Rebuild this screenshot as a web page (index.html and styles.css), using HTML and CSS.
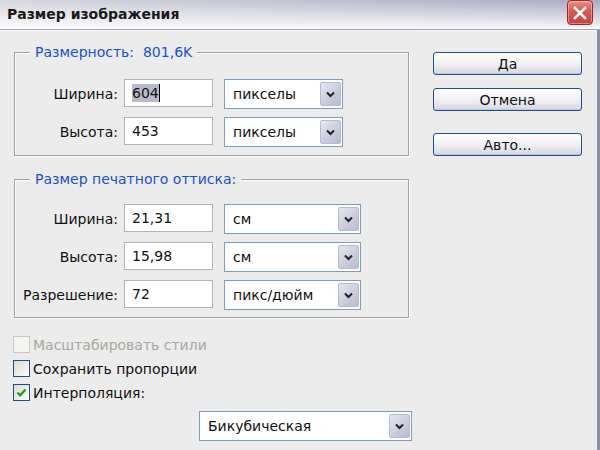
FILE: index.html
```html
<!DOCTYPE html>
<html lang="ru">
<head>
<meta charset="utf-8">
<title>Размер изображения</title>
<link rel="stylesheet" href="styles.css">
</head>
<body>
<div class="window">
  <div class="titlebar">
    <span class="title">Размер изображения</span>
    <div class="close">
      <svg width="16" height="16" viewBox="0 0 16 16"><path d="M3 3 L13 13 M13 3 L3 13" stroke="#fff" stroke-width="2.6" stroke-linecap="square" fill="none"/></svg>
    </div>
  </div>
  <div class="content">
    <div class="main">
      <div class="group g1">
        <div class="legend">Размерность:&nbsp; 801,6K</div>
        <div class="row">
          <span class="label">Ширина:</span>
          <div class="input"><span class="selected">604</span><span class="caret"></span></div>
          <div class="combo c1"><span class="ctext">пикселы</span><span class="drop"><svg width="9" height="7" viewBox="0 0 9 7"><path d="M1 1.5 L4.5 5 L8 1.5" stroke="#222" stroke-width="2" fill="none"/></svg></span></div>
        </div>
        <div class="row">
          <span class="label">Высота:</span>
          <div class="input">453</div>
          <div class="combo c1"><span class="ctext">пикселы</span><span class="drop"><svg width="9" height="7" viewBox="0 0 9 7"><path d="M1 1.5 L4.5 5 L8 1.5" stroke="#222" stroke-width="2" fill="none"/></svg></span></div>
        </div>
      </div>
      <div class="group g2">
        <div class="legend">Размер печатного оттиска:</div>
        <div class="row">
          <span class="label">Ширина:</span>
          <div class="input">21,31</div>
          <div class="combo c2"><span class="ctext">см</span><span class="drop"><svg width="9" height="7" viewBox="0 0 9 7"><path d="M1 1.5 L4.5 5 L8 1.5" stroke="#222" stroke-width="2" fill="none"/></svg></span></div>
        </div>
        <div class="row">
          <span class="label">Высота:</span>
          <div class="input">15,98</div>
          <div class="combo c2"><span class="ctext">см</span><span class="drop"><svg width="9" height="7" viewBox="0 0 9 7"><path d="M1 1.5 L4.5 5 L8 1.5" stroke="#222" stroke-width="2" fill="none"/></svg></span></div>
        </div>
        <div class="row">
          <span class="label">Разрешение:</span>
          <div class="input">72</div>
          <div class="combo c2"><span class="ctext">пикс/дюйм</span><span class="drop"><svg width="9" height="7" viewBox="0 0 9 7"><path d="M1 1.5 L4.5 5 L8 1.5" stroke="#222" stroke-width="2" fill="none"/></svg></span></div>
        </div>
      </div>
      <div class="checks">
        <div class="check disabled"><span class="box"></span><span>Масштабировать стили</span></div>
        <div class="check"><span class="box"></span><span>Сохранить пропорции</span></div>
        <div class="check"><span class="box"><svg width="11" height="11" viewBox="0 0 11 11"><path d="M1.5 5.5 L4.2 8.3 L9.5 2.5" stroke="#21a121" stroke-width="2.4" fill="none"/></svg></span><span>Интерполяция:</span></div>
      </div>
      <div class="bottom">
        <div class="combo c3"><span class="ctext">Бикубическая</span><span class="drop"><svg width="9" height="7" viewBox="0 0 9 7"><path d="M1 1.5 L4.5 5 L8 1.5" stroke="#222" stroke-width="2" fill="none"/></svg></span></div>
      </div>
    </div>
    <div class="buttons">
      <div class="btn b-ok">Да</div>
      <div class="btn b-cancel">Отмена</div>
      <div class="btn b-auto">Авто...</div>
    </div>
  </div>
</div>
</body>
</html>
```
FILE: styles.css
```css
* { box-sizing: border-box; }
html, body { margin: 0; padding: 0; }
body {
  width: 600px;
  height: 450px;
  overflow: hidden;
  font-family: "DejaVu Sans", Verdana, sans-serif;
  font-size: 14px;
  color: #111;
  background: #ececec;
}
.window {
  width: 600px;
  height: 450px;
  display: flex;
  flex-direction: column;
  background: #ececec;
}
.titlebar {
  height: 30px;
  flex: none;
  display: flex;
  justify-content: space-between;
  align-items: flex-start;
  background:
    linear-gradient(to bottom, rgba(255,255,255,0) 0%, rgba(255,255,255,0.92) 100%),
    linear-gradient(to right, #d6d6de, #aaaac4);
  border-bottom: 1px solid #a4a4b8;
  box-shadow: 0 1px 0 #fafafa;
}
.title {
  font-weight: bold;
  font-size: 14px;
  color: #1a1a1a;
  padding-left: 7px;
  line-height: 29px;
}
.close {
  width: 26px;
  height: 25px;
  margin-right: 7px;
  border: 1px solid #9a2a2a;
  border-radius: 4px;
  background: linear-gradient(to bottom, #ec8e86 0%, #d85a52 45%, #c8423c 100%);
  box-shadow: inset 0 0 0 1px rgba(255,255,255,0.35);
  display: flex;
  align-items: center;
  justify-content: center;
}
.content {
  flex: 1;
  display: flex;
  border-right: 3px solid #8e8ea6;
}
.main {
  width: 433px;
  padding-left: 14px;
  padding-top: 22px;
  display: flex;
  flex-direction: column;
}
.group {
  position: relative;
  width: 395px;
  border: 1px solid #a2a2a2;
  box-shadow: 1px 1px 0 #fff, inset 1px 1px 0 #fff;
  display: flex;
  flex-direction: column;
  gap: 8px;
}
.g1 { padding: 26px 0 8px 0; }
.g2 { margin-top: 23px; padding: 24px 0 7px 0; }
.legend {
  position: absolute;
  top: -10px;
  left: 15px;
  padding: 0 5px;
  background: #ececec;
  color: #1a4fd6;
  line-height: 18px;
}
.row {
  display: flex;
  align-items: center;
  height: 30px;
}
.label {
  width: 104px;
  text-align: right;
  padding-right: 1px;
}
.input {
  margin-left: 5px;
  width: 89px;
  height: 28px;
  align-self: flex-start;
  background: #fff;
  border: 1px solid #b4b4b4;
  padding-left: 7px;
  line-height: 26px;
  display: flex;
  align-items: center;
}
.selected {
  background: #b9b9cb;
  line-height: 18px;
}
.caret {
  display: inline-block;
  width: 1px;
  height: 18px;
  background: #000;
}
.combo {
  height: 30px;
  background: #fff;
  border: 1px solid #7f9db9;
  display: flex;
  align-items: center;
  justify-content: space-between;
  padding: 2px 1px 2px 8px;
}
.c1 { margin-left: 11px; width: 119px; }
.c2 { margin-left: 11px; width: 137px; }
.c3 { width: 213px; }
.drop {
  width: 21px;
  height: 100%;
  border: 1px solid #b8bacf;
  border-radius: 2px;
  background: linear-gradient(135deg, #e6e7f1 0%, #c9cbdc 60%, #b9bbd0 100%);
  display: flex;
  align-items: center;
  justify-content: center;
}
.checks {
  margin-top: 18px;
  margin-left: -1px;
  display: flex;
  flex-direction: column;
  gap: 7px;
}
.check {
  display: flex;
  align-items: center;
  gap: 3px;
  height: 17px;
}
.box {
  width: 17px;
  height: 17px;
  border: 1px solid #1c5180;
  background: linear-gradient(135deg, #dcdcd6 0%, #f2f2ee 70%, #fff 100%);
  display: flex;
  align-items: center;
  justify-content: center;
}
.disabled { color: #a8a8a0; }
.disabled .box { border-color: #cacac4; background: #f4f4f2; }
.bottom {
  margin-top: 10px;
  padding-left: 185px;
}
.buttons {
  width: 149px;
  padding-top: 22px;
  display: flex;
  flex-direction: column;
}
.btn {
  height: 23px;
  border: 1px solid #1f4f8f;
  border-radius: 3px;
  background: linear-gradient(to bottom, #ffffff 0%, #f1f1f5 50%, #d6d6e2 100%);
  box-shadow: inset 0 -1px 0 #c4c4d4;
  display: flex;
  align-items: center;
  justify-content: center;
  line-height: 1;
}
.b-cancel { margin-top: 13px; }
.b-auto { margin-top: 22px; }
```
